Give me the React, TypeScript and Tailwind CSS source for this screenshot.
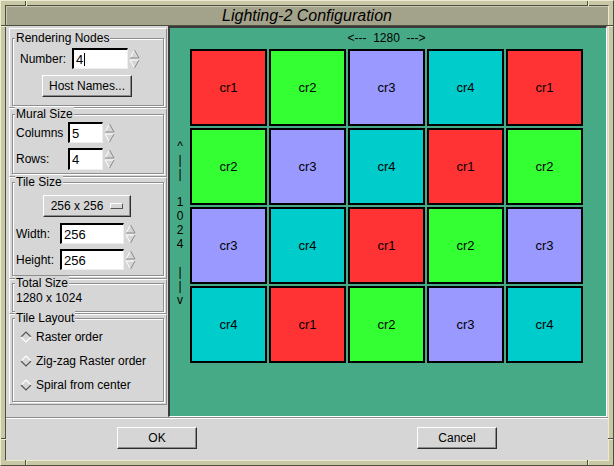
import React from "react"

const TILE_COLORS = ["bg-[#ff3333]", "bg-[#33ff33]", "bg-[#9999ff]", "bg-[#00cccc]"]
const ROWS = 4
const COLS = 5

function Spinner() {
  return (
    <svg width="11" height="20" viewBox="0 0 11 20" className="ml-[1px] shrink-0">
      <polygon points="5.5,1 10,9 1,9" fill="#d6d6d6" />
      <line x1="5.5" y1="1" x2="1" y2="9" stroke="#ffffff" strokeWidth="1" />
      <line x1="5.5" y1="1" x2="10" y2="9" stroke="#8a8a8a" strokeWidth="1" />
      <line x1="1" y1="9" x2="10" y2="9" stroke="#8a8a8a" strokeWidth="1" />
      <polygon points="1,11 10,11 5.5,19" fill="#d6d6d6" />
      <line x1="1" y1="11" x2="10" y2="11" stroke="#ffffff" strokeWidth="1" />
      <line x1="1" y1="11" x2="5.5" y2="19" stroke="#ffffff" strokeWidth="1" />
      <line x1="10" y1="11" x2="5.5" y2="19" stroke="#8a8a8a" strokeWidth="1" />
    </svg>
  )
}

function Radio({ on }: { on?: boolean }) {
  const top = on ? "#555555" : "#ffffff"
  const bottom = on ? "#ffffff" : "#555555"
  return (
    <svg width="12" height="12" viewBox="0 0 12 12" className="shrink-0">
      <polygon points="6,1 11,6 6,11 1,6" fill="#d6d6d6" />
      <polyline points="1,6 6,1 11,6" fill="none" stroke={top} strokeWidth="1.2" />
      <polyline points="1,6 6,11 11,6" fill="none" stroke={bottom} strokeWidth="1.2" />
    </svg>
  )
}

function TextField({ value, width, height = 21, cursor }: { value: string; width: number; height?: number; cursor?: boolean }) {
  return (
    <div
      className="flex items-center bg-white border-t-2 border-l-2 border-black border-b border-r border-b-[#eeeeee] border-r-[#eeeeee] pl-[2px] text-[13px] leading-none"
      style={{ width, height }}
    >
      {value}
      {cursor && <span className="ml-[1px] inline-block h-[13px] w-px bg-black" />}
    </div>
  )
}

// raised outer frame holding one etched group box
function Section({ label, frame, box, children }: { label: string; frame: string; box: string; children: React.ReactNode }) {
  return (
    <div className={`w-[158px] px-[2px] border border-t-white border-l-white border-b-[#8e8e8e] border-r-[#8e8e8e] ${frame}`}>
      <div className={`relative w-[152px] border border-[#8e8e8e] shadow-[1px_1px_0_#ffffff,inset_1px_1px_0_#ffffff] ${box}`}>
        <span className="absolute -top-[8px] left-[2px] bg-[#d6d6d6] px-[1px] leading-[14px]">{label}</span>
        {children}
      </div>
    </div>
  )
}

const raised =
  "bg-[#d6d6d6] border-t border-l border-white border-b border-r border-b-[#2e2e2e] border-r-[#2e2e2e] shadow-[inset_-1px_-1px_0_#8c8c8c]"

export default function App() {
  const vertical = ["^", "|", "|", "", "1", "0", "2", "4", "", "|", "|", "v"]

  return (
    <div className="relative w-[614px] h-[466px] bg-[#c8c8a6] border border-t-[#ecebd0] border-l-[#ecebd0] border-b-[#4e4e3e] border-r-[#4e4e3e] p-[4px] font-['Liberation_Sans',Arial,sans-serif] text-[12px] text-black">
      {/* frame resize notches */}
      <div className="absolute top-0 left-[24px] w-[2px] h-[5px] border-l border-[#4e4e3e] bg-[#ecebd0]" />
      <div className="absolute top-0 left-[586px] w-[2px] h-[5px] border-l border-[#4e4e3e] bg-[#ecebd0]" />
      <div className="absolute bottom-0 left-[24px] w-[2px] h-[5px] border-l border-[#4e4e3e] bg-[#ecebd0]" />
      <div className="absolute bottom-0 left-[586px] w-[2px] h-[5px] border-l border-[#4e4e3e] bg-[#ecebd0]" />
      <div className="absolute left-0 top-[24px] h-[2px] w-[5px] border-t border-[#4e4e3e] bg-[#ecebd0]" />
      <div className="absolute right-0 top-[24px] h-[2px] w-[5px] border-t border-[#4e4e3e] bg-[#ecebd0]" />
      <div className="absolute left-0 top-[437px] h-[2px] w-[5px] border-t border-[#4e4e3e] bg-[#ecebd0]" />
      <div className="absolute right-0 top-[437px] h-[2px] w-[5px] border-t border-[#4e4e3e] bg-[#ecebd0]" />

      <div className="flex h-full flex-col border border-t-[#4e4e3e] border-l-[#4e4e3e] border-b-[#ecebd0] border-r-[#ecebd0]">
        {/* title bar */}
        <div className="flex h-[20px] shrink-0 items-center justify-center bg-[#a3a38b] border-b border-[#4e4e3e] shadow-[inset_1px_1px_0_#c8c8b0] text-[16px] italic leading-none">
          Lighting-2 Configuration
        </div>

        <div className="flex flex-1 flex-col bg-[#d6d6d6]">
          <div className="flex h-[391px]">
            {/* left panel */}
            <div className="flex w-[162px] flex-col pl-[3px] pt-[2px]">
              <Section label="Rendering Nodes" frame="pt-[9px] pb-[1px]" box="h-[68px]">
                <div className="flex items-center pl-[7px] pt-[9px]">
                  <span className="w-[52px]">Number:</span>
                  <TextField value="4" width={56} cursor />
                  <Spinner />
                </div>
                <div className={`mt-[6px] ml-[29px] flex h-[22px] w-[90px] items-center justify-center ${raised}`}>Host Names...</div>
              </Section>

              <Section label="Mural Size" frame="pt-[5px] pb-[2px]" box="h-[60px]">
                <div className="flex items-center pl-[3px] pt-[7px]">
                  <span className="w-[52px]">Columns</span>
                  <TextField value="5" width={35} />
                  <Spinner />
                </div>
                <div className="mt-[5px] flex items-center pl-[3px]">
                  <span className="w-[52px]">Rows:</span>
                  <TextField value="4" width={35} height={22} />
                  <Spinner />
                </div>
              </Section>

              <Section label="Tile Size" frame="pt-[4px] pb-[2px]" box="h-[94px]">
                <div className={`mt-[12px] ml-[30px] flex h-[22px] w-[88px] items-center justify-center gap-[7px] ${raised}`}>
                  <span>256 x 256</span>
                  <span className="inline-block h-[6px] w-[13px] border border-t-white border-l-white border-b-[#555555] border-r-[#555555]" />
                </div>
                <div className="mt-[6px] flex items-center pl-[3px]">
                  <span className="w-[44px]">Width:</span>
                  <TextField value="256" width={64} />
                  <Spinner />
                </div>
                <div className="mt-[5px] flex items-center pl-[3px]">
                  <span className="w-[44px]">Height:</span>
                  <TextField value="256" width={64} />
                  <Spinner />
                </div>
              </Section>

              <Section label="Total Size" frame="pt-[3px] pb-[1px]" box="h-[29px]">
                <div className="pl-[3px] pt-[7px] leading-[14px]">1280 x 1024</div>
              </Section>

              <Section label="Tile Layout" frame="pt-[3px] pb-[2px]" box="h-[84px]">
                <div className="flex flex-col gap-[4px] pl-[7px] pt-[8px]">
                  <div className="flex h-[20px] items-center gap-[4px]">
                    <Radio on />
                    <span>Raster order</span>
                  </div>
                  <div className="flex h-[20px] items-center gap-[4px]">
                    <Radio />
                    <span>Zig-zag Raster order</span>
                  </div>
                  <div className="flex h-[20px] items-center gap-[4px]">
                    <Radio />
                    <span>Spiral from center</span>
                  </div>
                </div>
              </Section>
            </div>

            {/* mural canvas */}
            <div className="flex w-[439px] flex-col bg-[#47aa87] border-t-2 border-l-2 border-[#3a3a3a] border-b border-r border-b-white border-r-white">
              <div className="h-[21px] w-[413px] whitespace-pre pl-[20px] pt-[3px] text-center leading-[14px]">
                {"<---  1280  --->"}
              </div>
              <div className="flex">
                <div className="flex w-[20px] flex-col items-center pt-[90px]">
                  {vertical.map((ch, i) => (
                    <span key={i} className="h-[14px] leading-[14px]">
                      {ch}
                    </span>
                  ))}
                </div>
                <div className="grid grid-cols-[repeat(5,77px)] gap-[2px]">
                  {Array.from({ length: ROWS * COLS }, (_, i) => {
                    const r = Math.floor(i / COLS)
                    const c = i % COLS
                    const n = (r + c) % 4
                    return (
                      <div
                        key={i}
                        className={`flex h-[77px] w-[77px] items-center justify-center border-2 border-black text-[13px] ${TILE_COLORS[n]}`}
                      >
                        cr{n + 1}
                      </div>
                    )
                  })}
                </div>
              </div>
            </div>
          </div>

          {/* separator */}
          <div className="h-[2px] border-t border-[#8c8c8c] border-b border-b-white" />

          {/* buttons */}
          <div className="flex pl-[111px] pt-[8px]">
            <div className={`flex h-[22px] w-[80px] items-center justify-center ${raised}`}>OK</div>
            <div className={`ml-[220px] flex h-[22px] w-[80px] items-center justify-center ${raised}`}>Cancel</div>
          </div>
        </div>
      </div>
    </div>
  )
}
